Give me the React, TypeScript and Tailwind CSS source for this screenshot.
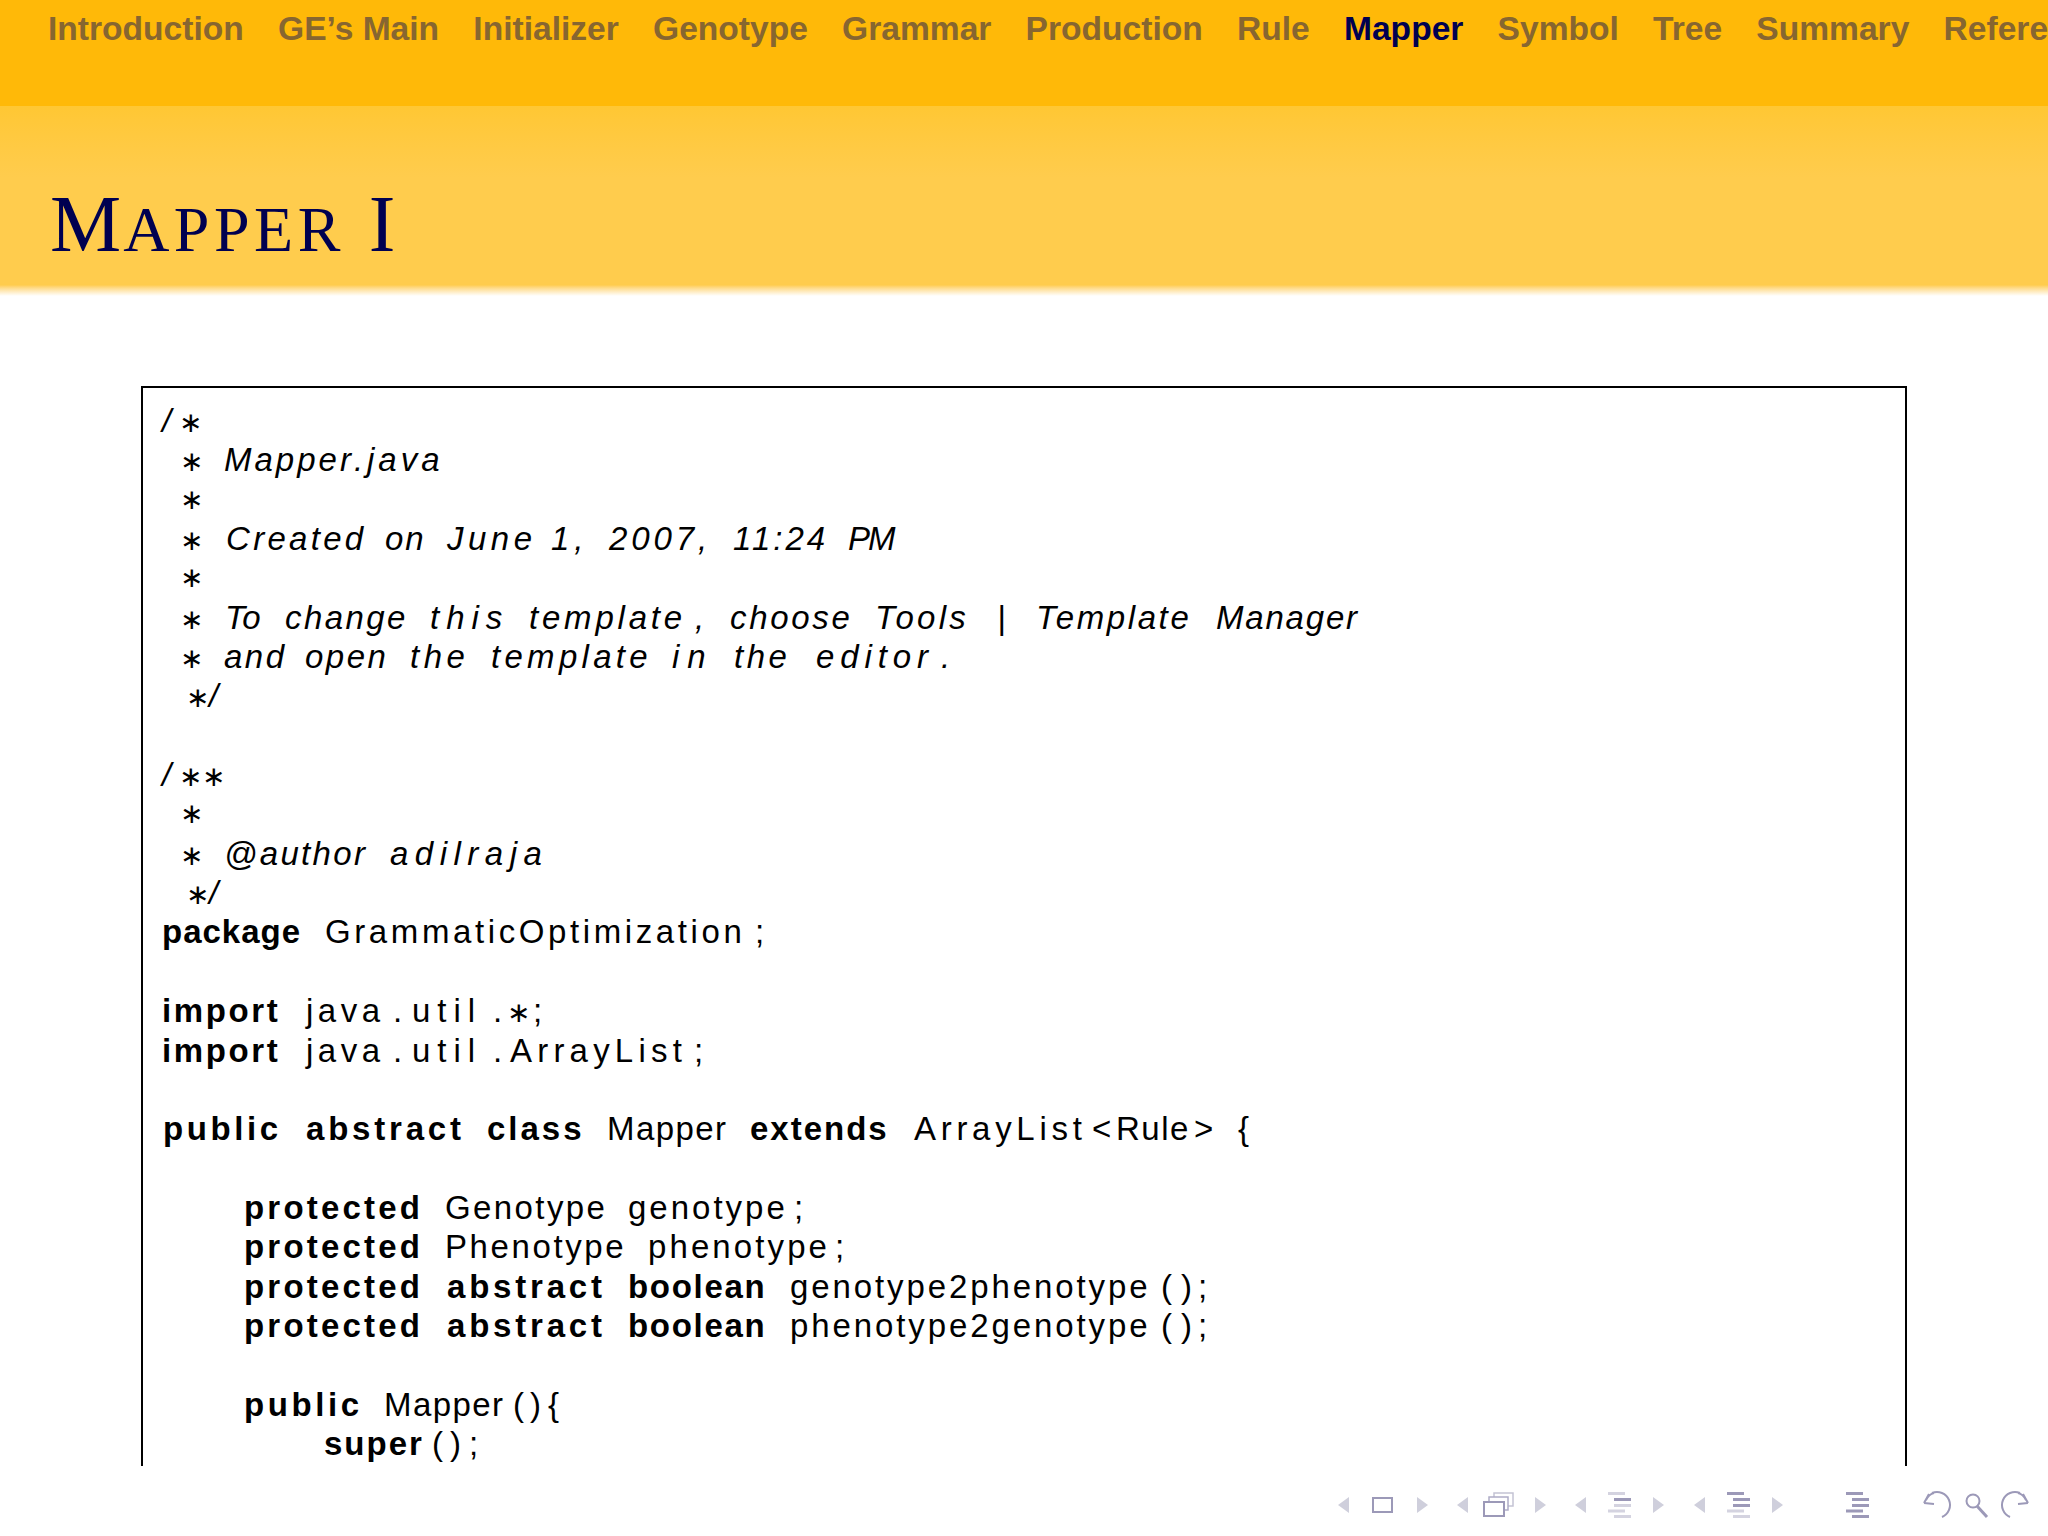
const navItems = ['Introduction', 'GE’s Main', 'Initializer', 'Genotype', 'Grammar', 'Production', 'Rule', 'Mapper', 'Symbol', 'Tree', 'Summary', 'References']

function Tri({ x, dir, y = 1505 }: { x: number; dir: 'l' | 'r'; y?: number }) {
  const d = dir === 'l' ? `M${x + 11} ${y - 8}L${x} ${y}L${x + 11} ${y + 8}Z` : `M${x} ${y - 8}L${x + 11} ${y}L${x} ${y + 8}Z`
  return <path d={d} fill="#cfcfdc" />
}

function ListIcon({ x, dark }: { x: number; dark: number[] }) {
  const rows = [
    { y: 1492, l: 0, w: 17 },
    { y: 1498, l: 6, w: 17 },
    { y: 1504, l: 6, w: 17 },
    { y: 1509.5, l: 0, w: 17 },
    { y: 1515, l: 6, w: 17 },
  ]
  return (
    <g>
      {rows.map((r, i) => (
        <rect key={i} x={x + r.l} y={r.y} width={r.w} height="3" fill={dark.includes(i) ? '#9c99b8' : '#d4d3e0'} />
      ))}
    </g>
  )
}

function BeamerNav() {
  return (
    <svg className="block w-[700px] h-[30px]" viewBox="1330 1490 700 30">
      <Tri x={1338} dir="l" />
      <rect x="1373" y="1498" width="19" height="14" fill="none" stroke="#9c99b8" strokeWidth="2" />
      <Tri x={1417} dir="r" />

      <Tri x={1457} dir="l" />
      <rect x="1494" y="1493" width="19" height="13" fill="#fff" stroke="#c4c3d4" strokeWidth="1.5" />
      <rect x="1489" y="1497" width="19" height="13" fill="#fff" stroke="#aeacc6" strokeWidth="1.5" />
      <rect x="1484" y="1502" width="20" height="14" fill="#fff" stroke="#9c99b8" strokeWidth="2" />
      <Tri x={1535} dir="r" />

      <Tri x={1575} dir="l" />
      <ListIcon x={1608} dark={[1]} />
      <Tri x={1653} dir="r" />

      <Tri x={1694} dir="l" />
      <ListIcon x={1727} dark={[0, 1, 2]} />
      <Tri x={1772} dir="r" />

      <ListIcon x={1846} dark={[0, 1, 2, 3, 4]} />

      <path d="M1932 1493a12 12 0 0 1 10 24" fill="none" stroke="#9c99b8" strokeWidth="2" />
      <path d="M1924 1503l5 -9 M1924 1503l10 1 M1926 1500q3 -6 8 -7" fill="none" stroke="#9c99b8" strokeWidth="2" />
      <circle cx="1973" cy="1501" r="6.5" fill="none" stroke="#9c99b8" strokeWidth="2" />
      <path d="M1977 1506l10 11" stroke="#9c99b8" strokeWidth="3" />
      <path d="M2020 1493a12 12 0 0 0 -10 24" fill="none" stroke="#9c99b8" strokeWidth="2" />
      <path d="M2028 1503l-5 -9 M2028 1503l-10 1 M2026 1500q-3 -6 -8 -7" fill="none" stroke="#9c99b8" strokeWidth="2" />
    </svg>
  )
}

// math asterisk of the listing, upright even inside the italic comments
function Ast() {
  return <span className="w-[16px] shrink-0 text-center not-italic font-['DejaVu_Sans',sans-serif] text-[28px]">∗</span>
}

function Star() {
  return (
    <span className="flex items-baseline w-[62px] shrink-0 pl-[18px]">
      <Ast />
    </span>
  )
}

function StarSlash() {
  return (
    <>
      <span className="flex items-baseline w-[47px] shrink-0 pl-[24px]"><Ast /></span>
      <span>/</span>
    </>
  )
}

function Row({ children }: { children?: React.ReactNode }) {
  return <div className="flex items-baseline h-[39.35px] whitespace-pre">{children}</div>
}

export default function App() {
  return (
    <div className="w-[2048px] h-[1536px] overflow-hidden bg-white font-['Liberation_Sans',sans-serif] text-black">
      {/* Navigation bar */}
      <div className="h-[106px] bg-[#ffb908] pl-[48px] pt-[9px] overflow-hidden">
        <nav className="flex gap-[34.2px] text-[33.6px] leading-[40px] font-bold whitespace-nowrap text-[#876630]">
          {navItems.map((item) => (
            <span key={item} className={item === 'Mapper' ? 'text-[#000050]' : ''}>{item}</span>
          ))}
        </nav>
      </div>

      {/* Frame title */}
      <div className="h-[179px] bg-gradient-to-b from-[#ffc733] to-[#ffcc4d] to-40% pl-[50px] pt-[72px] font-['Liberation_Serif',serif] text-[#000050] leading-[92px] whitespace-nowrap">
        <span className="text-[80px]">M</span>
        <span className="text-[64px] tracking-[4.5px] ml-[2px]">APPER</span>
        <span className="text-[80px] ml-[24px]">I</span>
      </div>
      <div className="h-[11px] bg-gradient-to-b from-[#ffcc4d] to-white" />

      {/* Listing box */}
      <div className="mt-[90px] ml-[141px] w-[1766px] h-[1080px] border-2 border-b-0 border-black overflow-hidden pl-[19px] pt-[13px] text-[33px] leading-[39.35px]">
        <div className="italic">
          <Row><span className="w-[17px] shrink-0">/</span><Ast /></Row>
          <Row>
            <Star />
            <span className="w-[130px] shrink-0 tracking-[3px]">Mapper</span>
            <span className="w-[13px] shrink-0">.</span>
            <span className="tracking-[4px]">java</span>
          </Row>
          <Row><Star /></Row>
          <Row>
            <Star />
            <span className="ml-[2px] w-[159px] shrink-0 tracking-[3.3px]">Created</span>
            <span className="w-[62px] shrink-0 tracking-[2px]">on</span>
            <span className="w-[104px] shrink-0 tracking-[4.5px]">June</span>
            <span className="w-[58px] shrink-0 tracking-[5px]">1,</span>
            <span className="w-[124px] shrink-0 tracking-[3.9px]">2007,</span>
            <span className="w-[115px] shrink-0 tracking-[3px]">11:24</span>
            <span className="tracking-[-2px]">PM</span>
          </Row>
          <Row><Star /></Row>
          <Row>
            <Star />
            <span className="ml-[1px] w-[60px] shrink-0">To</span>
            <span className="w-[145px] shrink-0 tracking-[2.4px]">change</span>
            <span className="w-[99px] shrink-0 tracking-[7px]">this</span>
            <span className="w-[166px] shrink-0 tracking-[3.8px]">template</span>
            <span className="w-[35px] shrink-0">,</span>
            <span className="w-[145px] shrink-0 tracking-[2.7px]">choose</span>
            <span className="w-[122px] shrink-0 tracking-[3.3px]">Tools</span>
            <span className="w-[39px] shrink-0">|</span>
            <span className="w-[180px] shrink-0 tracking-[2.6px]">Template</span>
            <span className="tracking-[1.8px]">Manager</span>
          </Row>
          <Row>
            <Star />
            <span className="w-[81px] shrink-0 tracking-[2.5px]">and</span>
            <span className="w-[105px] shrink-0 tracking-[2.5px]">open</span>
            <span className="w-[81px] shrink-0 tracking-[4.5px]">the</span>
            <span className="w-[181px] shrink-0 tracking-[4.3px]">template</span>
            <span className="w-[62px] shrink-0 tracking-[8px]">in</span>
            <span className="w-[82px] shrink-0 tracking-[3.5px]">the</span>
            <span className="w-[125px] shrink-0 tracking-[5.9px]">editor</span>
            <span>.</span>
          </Row>
          <Row><StarSlash /></Row>
          <Row />
          <Row>
            <span className="w-[17px] shrink-0">/</span>
            <Ast />
            <span className="ml-[7px] flex items-baseline"><Ast /></span>
          </Row>
          <Row><Star /></Row>
          <Row>
            <Star />
            <span className="w-[166px] shrink-0 tracking-[2.3px]">@author</span>
            <span className="tracking-[6.5px]">adilraja</span>
          </Row>
          <Row><StarSlash /></Row>
        </div>

        <Row>
          <span className="w-[163px] shrink-0 font-bold tracking-[1px]">package</span>
          <span className="w-[430px] shrink-0 tracking-[3.6px]">GrammaticOptimization</span>
          <span>;</span>
        </Row>
        <Row />
        <Row>
          <span className="w-[144px] shrink-0 font-bold tracking-[2.6px]">import</span>
          <span className="w-[87px] shrink-0 tracking-[4.5px]">java</span>
          <span className="w-[19px] shrink-0">.</span>
          <span className="w-[81px] shrink-0 tracking-[7px]">util</span>
          <span className="w-[14px] shrink-0">.</span>
          <span className="flex items-baseline w-[26px] shrink-0"><Ast /></span>
          <span>;</span>
        </Row>
        <Row>
          <span className="w-[144px] shrink-0 font-bold tracking-[2.6px]">import</span>
          <span className="w-[87px] shrink-0 tracking-[4.5px]">java</span>
          <span className="w-[19px] shrink-0">.</span>
          <span className="w-[81px] shrink-0 tracking-[7px]">util</span>
          <span className="w-[17px] shrink-0">.</span>
          <span className="w-[184px] shrink-0 tracking-[5.2px]">ArrayList</span>
          <span>;</span>
        </Row>
        <Row />
        <Row>
          <span className="w-[1px] shrink-0" />
          <span className="w-[143px] shrink-0 font-bold tracking-[3.6px]">public</span>
          <span className="w-[181px] shrink-0 font-bold tracking-[3.8px]">abstract</span>
          <span className="w-[120px] shrink-0 font-bold tracking-[3px]">class</span>
          <span className="w-[143px] shrink-0 tracking-[1.4px]">Mapper</span>
          <span className="w-[164px] shrink-0 font-bold tracking-[2px]">extends</span>
          <span className="w-[178px] shrink-0 tracking-[4.7px]">ArrayList</span>
          <span className="w-[24px] shrink-0">&lt;</span>
          <span className="w-[78px] shrink-0 tracking-[1.5px]">Rule</span>
          <span className="w-[44px] shrink-0">&gt;</span>
          <span>{'{'}</span>
        </Row>
        <Row />
        <Row>
          <span className="w-[82px] shrink-0" />
          <span className="w-[201px] shrink-0 font-bold tracking-[3.2px]">protected</span>
          <span className="w-[183px] shrink-0 tracking-[2.4px]">Genotype</span>
          <span className="w-[166px] shrink-0 tracking-[3px]">genotype</span>
          <span>;</span>
        </Row>
        <Row>
          <span className="w-[82px] shrink-0" />
          <span className="w-[201px] shrink-0 font-bold tracking-[3.2px]">protected</span>
          <span className="w-[203px] shrink-0 tracking-[2.6px]">Phenotype</span>
          <span className="w-[187px] shrink-0 tracking-[3.1px]">phenotype</span>
          <span>;</span>
        </Row>
        <Row>
          <span className="w-[82px] shrink-0" />
          <span className="w-[203px] shrink-0 font-bold tracking-[3.2px]">protected</span>
          <span className="w-[181px] shrink-0 font-bold tracking-[3.8px]">abstract</span>
          <span className="w-[162px] shrink-0 font-bold tracking-[1.7px]">boolean</span>
          <span className="w-[371px] shrink-0 tracking-[2.9px]">genotype2phenotype</span>
          <span className="w-[20px] shrink-0">(</span>
          <span className="w-[17px] shrink-0">)</span>
          <span>;</span>
        </Row>
        <Row>
          <span className="w-[82px] shrink-0" />
          <span className="w-[203px] shrink-0 font-bold tracking-[3.2px]">protected</span>
          <span className="w-[181px] shrink-0 font-bold tracking-[3.8px]">abstract</span>
          <span className="w-[162px] shrink-0 font-bold tracking-[1.7px]">boolean</span>
          <span className="w-[371px] shrink-0 tracking-[2.9px]">phenotype2genotype</span>
          <span className="w-[20px] shrink-0">(</span>
          <span className="w-[17px] shrink-0">)</span>
          <span>;</span>
        </Row>
        <Row />
        <Row>
          <span className="w-[82px] shrink-0" />
          <span className="w-[140px] shrink-0 font-bold tracking-[3.6px]">public</span>
          <span className="w-[129px] shrink-0 tracking-[1.4px]">Mapper</span>
          <span className="w-[17px] shrink-0">(</span>
          <span className="w-[18px] shrink-0">)</span>
          <span>{'{'}</span>
        </Row>
        <Row>
          <span className="w-[162px] shrink-0" />
          <span className="w-[108px] shrink-0 font-bold tracking-[2px]">super</span>
          <span className="w-[18px] shrink-0">(</span>
          <span className="w-[19px] shrink-0">)</span>
          <span>;</span>
        </Row>
      </div>

      {/* Beamer navigation symbols */}
      <div className="flex justify-end pr-[18px] mt-[24px]">
        <BeamerNav />
      </div>
    </div>
  )
}
